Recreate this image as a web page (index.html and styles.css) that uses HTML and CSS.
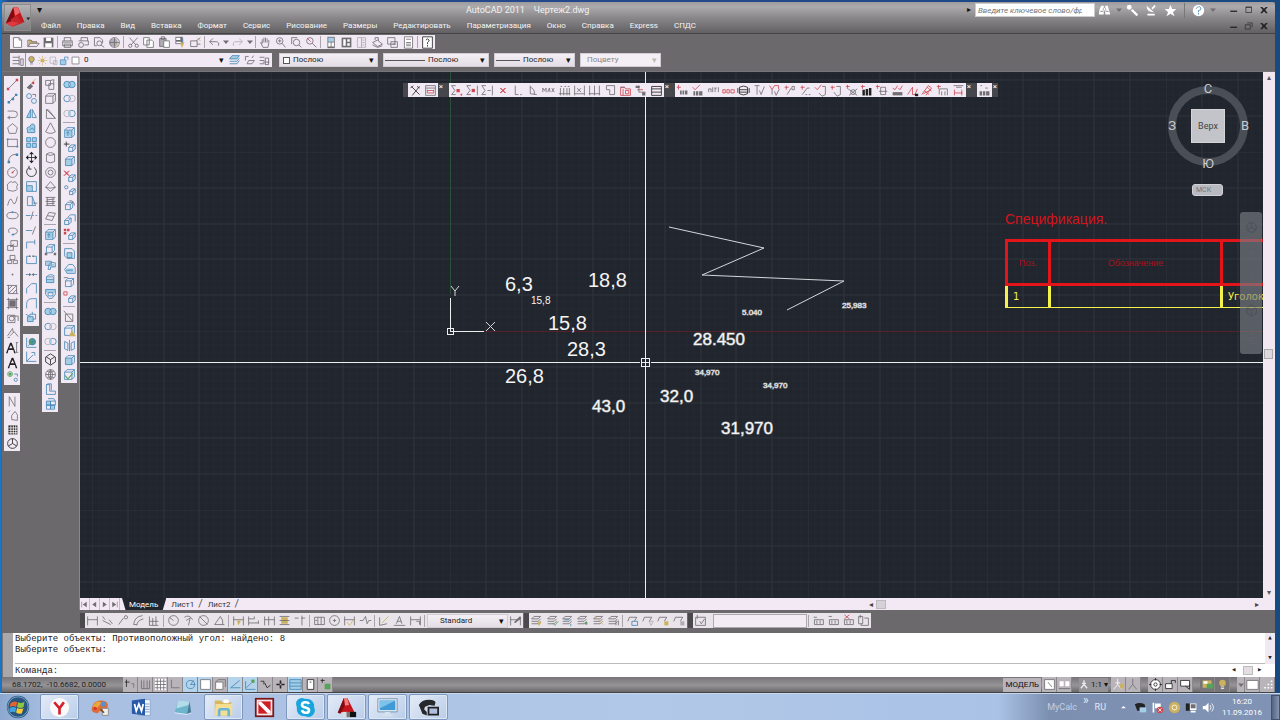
FILE: index.html
```html
<!DOCTYPE html>
<html lang="ru">
<head>
<meta charset="utf-8">
<title>AutoCAD 2011 - Чертеж2.dwg</title>
<link rel="stylesheet" href="styles.css">
</head>
<body>
<div class="window">
  <header class="titlebar">
    <button class="app-btn" aria-label="Меню приложения">
      <svg viewBox="0 0 28 26"><path d="M1 19 9 2h5l7 16-6 1-2-3-6 1-1 4z" fill="#c4161c"/><path d="M9 2 1 19l5 2 4-9z" fill="#7e0b10"/><path d="M9 2h5l2 6-5 3z" fill="#f0656a"/><path d="M6 15l7-4 6 8-11 4z" fill="#c4262c"/><path d="M1 19l6-2 8 2-8 4z" fill="#e03a3f"/><path d="M23 13h4l-2 3z" fill="#222"/></svg>
    </button>
    <div class="title-main">
      <div class="title-row">
        <button class="quick" aria-label="Настройка панели">▾</button>
        <h1>AutoCAD 2011 &nbsp;&nbsp; Чертеж2.dwg</h1>
        <div class="search">
          <span class="tri">▸</span>
          <input type="search" aria-label="Поиск" placeholder="Введите ключевое слово/фразу">
          <div class="icons light" data-icons="binoc tiny key dish star"></div>
          <div class="icons light helpgrp" data-icons="help tiny"></div>
          <div class="icons wctl" data-icons="wmin wmax wclose"></div>
        </div>
      </div>
      <div class="menu-row">
        <nav class="menu">
          <button>Файл</button><button>Правка</button><button>Вид</button><button>Вставка</button><button>Формат</button><button>Сервис</button><button>Рисование</button><button>Размеры</button><button>Редактировать</button><button>Параметризация</button><button>Окно</button><button>Справка</button><button>Express</button><button>СПДС</button>
        </nav>
        <div class="icons wctl" data-icons="wmin wrest wclose"></div>
      </div>
    </div>
  </header>

  <div class="toolrows">
    <div class="bar std" role="toolbar" aria-label="Стандартная" data-icons="new open save | print preview plot globe | cut copy paste match block | undo tiny redo tiny | pan zoomr zoomw zoomp | props dc pal sheet markup calc | helpb"></div>
    <div class="proprow">
      <div class="bar layers" role="toolbar" aria-label="Слои">
        <div class="icons" data-icons="layerp"></div>
        <div class="layerbox">
          <div class="icons" data-icons="bulb sun freeze lock swatch"></div>
          <select aria-label="Слой"><option>0</option></select>
        </div>
        <div class="icons" data-icons="layblue layprev laystate"></div>
      </div>
      <div class="props">
        <div class="sel color"><i class="box"></i><select aria-label="Цвет"><option>Послою</option></select></div>
        <div class="sel lt"><i class="line"></i><select aria-label="Тип линий"><option>Послою</option></select></div>
        <div class="sel lw"><i class="line short"></i><select aria-label="Вес линий"><option>Послою</option></select></div>
        <div class="sel off"><select aria-label="Стиль печати" disabled><option>Поцвету</option></select></div>
      </div>
    </div>
  </div>

  <div class="work">
    <aside class="dock">
      <div class="dockcol">
        <div class="bar v n21" role="toolbar" aria-label="Рисование" data-icons="line xline pline poly rect arc circ cloud spline ell ellarc insb mkb point hatch grad region tbl mtext text add"></div>
        <div class="bar v n4" role="toolbar" aria-label="Север" data-icons="north leaf gridb wheel"></div>
      </div>
      <div class="dockcol">
        <div class="bar v n17" role="toolbar" aria-label="Редактирование" data-icons="brush copyo mirror offset array move rotate scale stretch trim extend break1 break2 join chamf fillet explode"></div>
        <div class="bar v n2" role="toolbar" aria-label="ПСК" data-icons="ucsw ucs3"></div>
      </div>
      <div class="dockcol">
        <div class="bar v m3" role="toolbar" aria-label="Моделирование" data-icons="psolid box wedge cone sphere cyl torus pyr helix plane | extr press sweep revolve loft | union subt inter | orbit globe2 lshape cubes"></div>
      </div>
      <div class="dockcol">
        <div class="bar v m4" role="toolbar" aria-label="Редактирование тел" data-icons="union subt inter | extr movef cube delf copyf rotf tapf colf | copye cole imprint clean | boxline warn sep2 cube check"></div>
      </div>
    </aside>

    <main class="docwin">
      <div class="viewrow">
        <div class="canvas">
          <svg class="drawing" aria-label="Чертеж">
            <defs>
              <pattern id="major" x="450" y="331" width="179" height="179" patternUnits="userSpaceOnUse">
                <path d="M7 0v179M14 0v179M22 0v179M29 0v179M43 0v179M50 0v179M58 0v179M65 0v179M79 0v179M86 0v179M93 0v179M100 0v179M114 0v179M122 0v179M129 0v179M136 0v179M150 0v179M157 0v179M165 0v179M172 0v179M0 7h179M0 14h179M0 22h179M0 29h179M0 43h179M0 50h179M0 58h179M0 65h179M0 79h179M0 86h179M0 93h179M0 100h179M0 114h179M0 122h179M0 129h179M0 136h179M0 150h179M0 157h179M0 165h179M0 172h179" stroke="#242931"/>
                <path d="M0 0v179M36 0v179M72 0v179M107 0v179M143 0v179M0 0h179M0 36h179M0 72h179M0 107h179M0 143h179" stroke="#2e343d"/>
              </pattern>
            </defs>
            <g transform="translate(-80 -72)">
              <path d="M80 72h4000v3000h-4000z" fill="url(#major)" shape-rendering="crispEdges"/>
              <g fill="none" shape-rendering="crispEdges">
                <path d="M450 331h4000" stroke="#552129"/>
                <path d="M450 72v222" stroke="#2c4f3a"/>
                <path d="M450 298v33H484M447 328h6v6h-6zM80 362h560M651 362h4000M645 72v286M645 367v3000M641 358h8v8h-8zM642 362h7M645 359v7" stroke="#eceef0"/>
              </g>
              <g fill="none" stroke="#d4d6da">
                <path d="M451 286l4 5 4-5M455 291v5M486 322l9 9M495 322l-9 9"/>
                <path d="M669 227 764 248 702 275 844 281 787 310"/>
              </g>
              <g class="num">
                <text x="505" y="291">6,3</text><text x="588" y="287">18,8</text><text x="548" y="330">15,8</text><text x="567" y="356">28,3</text><text x="505" y="383">26,8</text>
                <text class="sm" x="531" y="304">15,8</text>
              </g>
              <g class="num nar">
                <text x="592" y="412">43,0</text><text x="660" y="402">32,0</text><text x="693" y="345">28.450</text><text x="721" y="434">31,970</text>
                <text class="sm" x="742" y="315">5.040</text><text class="sm" x="695" y="375">34,970</text><text class="sm" x="763" y="388">34,970</text><text class="sm" x="842" y="308">25,983</text>
              </g>
            </g>
          </svg>

          <table class="spec">
            <caption>Спецификация.</caption>
            <tr><th>Поз.</th><th>Обозначение</th><th></th></tr>
            <tr><td>1</td><td></td><td>Уголок</td></tr>
          </table>

          <div class="floats">
            <div class="bar f f2" role="toolbar" aria-label="Настройки" data-icons="hammer redset"></div><button class="cl" aria-label="Закрыть">×</button>
            <div class="bar f f14" role="toolbar" aria-label="Размеры СПДС" data-icons="sig sig2 sig3 xred ell2 angb max arrs arr1 arr2 sq fold flags rows"></div><button class="cl" aria-label="Закрыть">×</button>
            <div class="bar f f19" role="toolbar" aria-label="Выноски СПДС" data-icons="pnum cnum alt redt stack tv yv sn1 sn2 tag1 tag2 gearr bars brack lev tri3 rhat comb dimr"></div><button class="cl" aria-label="Закрыть">×</button>
            <div class="bar f f1" role="toolbar" aria-label="Отметки" data-icons="note"></div><button class="cl" aria-label="Закрыть">×</button>
          </div>

          <div class="cube">
            <div class="ring"></div>
            <span class="dir n">С</span><span class="dir w">З</span><span class="dir e">В</span><span class="dir s">Ю</span>
            <button class="face">Верх</button>
            <button class="wcs">МСК</button>
          </div>
          <div class="navbar"><div class="icons" data-icons="wheel pan zoomr orbit markup"></div></div>
        </div>
        <div class="vscroll"><button aria-label="Вверх">▴</button><i></i><button aria-label="Вниз">▾</button></div>
      </div>
      <div class="tabs">
        <div class="icons tabnav" data-icons="first prev next last"></div>
        <button class="tab on">Модель</button><button class="tab">Лист1</button><button class="tab">Лист2</button>
        <div class="hscroll"><button aria-label="Влево">◂</button><i></i><button class="end" aria-label="Вправо">▸</button></div>
      </div>
    </main>
  </div>

  <div class="bottombars">
    <div class="bar d1" role="toolbar" aria-label="Размер">
      <div class="icons grow" data-icons="dlin dalign darc0 darc dord | drad djog ddia dang | dq dbase dcont dspace dbreak | dtol dcen dinsp djl | ded dted dupd |"></div>
      <div class="sel std2"><select aria-label="Размерный стиль"><option>Standard</option></select></div>
      <div class="icons" data-icons="dsty"></div>
    </div>
    <div class="bar d2" role="toolbar" aria-label="Слои II" data-icons="lay1 lay2 lay3 lay4 lay5 lay6 | lay7 lay8 lay9 lay10"></div>
    <div class="bar d3" role="toolbar" aria-label="Ссылки">
      <div class="icons" data-icons="refed"></div><input aria-label="Имя ссылки"><div class="icons grow" data-icons="| refa refr refx refs"></div>
    </div>
  </div>

  <section class="cmd">
    <div class="grip"></div>
    <div class="cmdtext">
      <div class="log"><p>Выберите объекты: Противоположный угол: найдено: 8</p><p>Выберите объекты:</p></div>
      <div class="prompt"><label for="cmdline">Команда:</label><input id="cmdline"><span class="cs">◂</span><i></i><span class="cs">▸</span></div>
    </div>
    <div class="cscroll"><button aria-label="Вверх">▴</button><button aria-label="Вниз">▾</button></div>
  </section>

  <footer class="status">
    <span class="coords">68.1702, &nbsp;-10.6682, 0.0000</span>
    <div class="icons sb" data-icons="s1 s2 s3 s4 s5+ s6+ s7 s8+ s9+ s10 s11 s12+ s13 s14"></div>
    <div class="sright">
      <button class="model">МОДЕЛЬ</button>
      <div class="icons sb" data-icons="m1 m2"></div>
      <button class="scale"><svg viewBox="0 0 16 16"><path d="M8 1v7L3 14M8 8l5 6M5 6h6" stroke="#eee" stroke-width="2" fill="none"/></svg>1:1 ▾</button>
      <div class="icons sb" data-icons="m3 m4"></div>
      <div class="icons sb" data-icons="m5 m6 m7"></div>
      <div class="icons sb dark" data-icons="m8 m9"></div>
      <div class="icons sb" data-icons="tiny m10 m11"></div>
    </div>
  </footer>
</div>

<div class="taskbar">
  <button class="start" aria-label="Пуск"><svg viewBox="0 0 28 28"><circle cx="14" cy="14" r="12" fill="#28557f"/><circle cx="14" cy="14" r="11" fill="none" stroke="#7ba7c9"/><path d="M6 10q4-3 7-1l-1 5q-3-2-7 0z" fill="#e8622c"/><path d="M14 9q4 2 7-1l-1 6q-4 2-7 0z" fill="#8cc63f"/><path d="M5 15q4-2 7 0l-1 5q-3-2-6 0z" fill="#3fa3dd"/><path d="M13 15q4 2 7 0l-2 6q-3 1-6-1z" fill="#fccb2e"/></svg></button>
  <div class="tasks">
    <button class="open" aria-label="Яндекс"><svg viewBox="0 0 24 24"><circle cx="12" cy="12" r="11" fill="#fafafa"/><path d="M6 6l6 7 5-7M12 13v7" stroke="#d5202b" stroke-width="3" fill="none"/></svg></button>
    <button aria-label="Paint"><svg viewBox="0 0 24 24"><path d="M2 13Q4 3 14 4q8 1 6 8-3 6-9 4-2 4-5 2-5-1-4-5z" fill="#dc6d36"/><path d="M3 10l5-5 6 1-7 8z" fill="#eaa83b"/><circle cx="15" cy="8" r="3" fill="#5a8fd0"/><circle cx="6" cy="13" r="2" fill="#d33"/><path d="M14 13h7v8h-7z" fill="#eee" stroke="#888"/><path d="M12 14l4 4" stroke="#7c4a1d" stroke-width="2"/></svg></button>
    <button aria-label="Word"><svg viewBox="0 0 24 24"><path d="M9 3h13v18H9z" fill="#f4f7fc" stroke="#8aa5cc"/><path d="M16 8h5M16 11h5M16 14h5M16 17h5" stroke="#6e93c8"/><path d="M1 4l15-2v19L1 19z" fill="#275aa8"/><path d="M4 8l2 8 3-8 3 8 2-8" stroke="#fff" stroke-width="2" fill="none"/></svg></button>
    <button aria-label="Блокнот"><svg viewBox="0 0 24 24"><path d="M7 4l13 1-3 15-14-2z" fill="#6eb4cc"/><path d="M7 4l13 1-1 4L5 13z" fill="#b4dce8"/><path d="M20 5l2 13-5 2z" fill="#487f96"/><path d="M3 18l14 2 5-2" stroke="#eef" fill="none"/></svg></button>
    <button class="open" aria-label="Проводник"><svg viewBox="0 0 24 24"><path d="M2 4h7l2 2h10v15H2z" fill="#d9b75e"/><path d="M3 8h19v13H2z" fill="#f4de92"/><path d="M12 3h6v4h-6z" fill="#fff"/><path d="M7 22v-6q0-2 2-2h7q2 0 2 2v6" fill="none" stroke="#69b4dc" stroke-width="3"/></svg></button>
    <button aria-label="NormaCS"><svg viewBox="0 0 24 24"><path d="M1 1h22v22H1z" fill="#7d1518"/><path d="M3 3h18v18H3z" fill="#f3e6e6"/><path d="M5 5h14v14H5z" fill="#d01c24"/><path d="M5 5h3l11 11v3h-3L5 8z" fill="#fff"/></svg></button>
    <button class="open" aria-label="Skype"><svg viewBox="0 0 24 24"><path d="M3 3q4-3 8-1 11-1 11 10 2 5-2 9-4 3-8 1Q1 22 2 11 0 6 3 3z" fill="#18a5dc"/><path d="M16 8q-1-2-4-2-4 0-4 3 0 2 4 3t4 3q0 3-4 3-3 0-4-3" stroke="#fff" stroke-width="3" fill="none"/></svg></button>
    <button class="open" aria-label="AutoCAD"><svg viewBox="0 0 24 24"><path d="M2 18 9 1h4l8 16H9z" fill="#c4161c"/><path d="M9 1h4l2 8-5 1z" fill="#f37a7e"/><path d="M9 1 2 18l3 1 5-9z" fill="#7c0d12"/><path d="M8 17h5v6H8z" fill="#ddd"/><path d="M12 17h5v6h-5z" fill="#777"/><path d="M16 17h7v6h-7z" fill="#111"/></svg></button>
    <button class="open" aria-label="Компьютер"><svg viewBox="0 0 24 24"><path d="M1 2h22v15H1z" fill="#e8f1f8" stroke="#6e8ca8"/><path d="M3 4h18v11H3z" fill="#3f9ad6"/><path d="M3 4h18L3 13z" fill="#7cc2ec"/><path d="M9 17h6v3h3v2H6v-2h3z" fill="#d6e2ec"/></svg></button>
    <button class="open" aria-label="Камера"><svg viewBox="0 0 24 24"><path d="M1 9q3-6 12-6 6 0 7 3l-1 4-6-1-5 2-1 3 3 3v4l-5-2-2-5z" fill="#26282b"/><path d="M12 12h11v8H12z" fill="#aebfe0" stroke="#222" stroke-width="2"/></svg></button>
  </div>
  <div class="tray">
    <span>MyCalc</span><span class="chev">»</span><span class="lang">RU</span>
    <div class="icons" data-icons="trup tcam tflag tav tnet tvol"></div>
    <time class="clock">16:20<br>11.09.2016</time>
    <button class="show" aria-label="Свернуть все окна"></button>
  </div>
</div>
<script src="icons.js"></script>
</body>
</html>
```
FILE: styles.css
```css
* { box-sizing: border-box; }
body { margin: 0; height: 100vh; display: flex; flex-direction: column; overflow: hidden; font: 8px/10px Roboto, "Noto Sans", sans-serif; color: #222; background: linear-gradient(90deg, #1a78c8, #24488a 8px, #24488a 60%, #174a80); }
button, input, select { font: inherit; color: inherit; margin: 0; padding: 0; border: 0; background: none; border-radius: 0; }
select { appearance: none; flex: 1; min-width: 0; height: 100%; outline: 0; opacity: 1; }
svg { display: block; }
h1, p { margin: 0; font-weight: 400; }
.window { flex: 1; min-height: 0; margin: 2px 5px 0 2px; display: flex; flex-direction: column; background: #6b696b; }

.titlebar { height: 32px; display: flex; background: linear-gradient(#9d9b9e, #acaaac 15%, #8a888a 50%, #626062); border-bottom: 1px solid #444; border-radius: 3px 3px 0 0; }
.app-btn { width: 27px; height: 27px; margin: 2px 0 0 2px; background: linear-gradient(#b5b3b5, #807e80); border: 1px solid #8c8a8c; }
.app-btn svg { width: 26px; height: 25px; }
.title-main { flex: 1; display: flex; flex-direction: column; }
.title-row { height: 17px; display: flex; align-items: center; justify-content: space-between; }
.quick { width: 16px; color: #111; font-size: 10px; }
.title-row h1 { margin-left: 419px; flex: 1; color: #f2f2f2; font-size: 9px; }
.search { display: flex; align-items: center; height: 16px; }
.search .tri { color: #111; width: 8px; }
.search input { width: 120px; height: 14px; background: #fff; font-style: italic; padding: 0 2px; border: 1px solid #ccc; }
.search input::placeholder { color: #777; opacity: 1; }
.helpgrp { border-left: 1px solid #777; margin-left: 4px; padding-left: 4px; }
.wctl { margin: 0 4px 0 9px; }
.wctl .ic { width: 10px; height: 10px; }
.wctl button { width: 11px; }
.menu-row { flex: 1; display: flex; justify-content: space-between; align-items: center; }
.menu { display: flex; gap: 16px; margin-left: 10px; color: #f4f4f4; }

.icons { display: flex; align-items: center; }
.icons button, .bar button { width: 15px; height: 15px; display: flex; align-items: center; justify-content: center; flex: 0 1 auto; }
.icons button.tiny, .bar button.tiny { width: 8px; }
.ic { width: 13px; height: 13px; fill: none; stroke-width: 1; flex: none; }
.tiny .ic { width: 8px; height: 8px; }
.light button { width: 19px; }
.light button.tiny { width: 9px; }
.bar { display: flex; background: #f1e9f3; align-items: center; }
.bar > button { flex: 1; }
.bar > button.tiny { flex: 0 0 8px; }
.bar hr, .icons hr { margin: 0 1px; border: 0; width: 2px; height: 12px; border-left: 1px solid #aaa5ac; flex: none; }
.bar .grow { flex: 1; justify-content: space-between; }
.grow button { flex: 1; }

.toolrows { height: 38px; padding: 1px 0 0 8px; display: flex; flex-direction: column; gap: 4px; border-bottom: 1px solid #77757a; }
.std { width: 425px; height: 14px; }
.proprow { display: flex; height: 14px; }
.layers { width: 262px; height: 14px; }
.layerbox { flex: 1; display: flex; align-items: center; height: 14px; border-left: 1px solid #999; }
.layerbox .icons button { width: 11px; }
.layerbox .ic { width: 11px; height: 11px; }
.layerbox::after, .sel::after { content: "▾"; width: 8px; color: #111; pointer-events: none; font-size: 9px; }
.layerbox select { padding-left: 3px; }
.props { display: flex; margin-left: 7px; gap: 5px; }
.sel { display: flex; align-items: center; height: 14px; background: linear-gradient(#f4eef5, #e4dde5); border: 1px solid #d2ccd3; }
.sel select { padding-left: 3px; }
.sel.color, .sel.std2 { width: 99px; }
.sel.lt { width: 106px; }
.sel.lw { width: 81px; }
.sel.off { width: 81px; color: #888; background: #f4eef5; }
.sel.off select { padding-left: 6px; }
.sel.off::after { color: #bbb; }
.box { width: 7px; height: 7px; border: 1px solid #555; background: #fff; margin-left: 3px; }
.line { width: 40px; height: 1px; background: #555; margin-left: 1px; }
.line.short { width: 24px; }

.work { flex: 1; min-height: 0; display: flex; }
.dock { width: 78px; display: flex; gap: 3px; padding: 4px 0 0 2px; border-right: 1px solid #8a888a; }
.dockcol { display: flex; flex-direction: column; gap: 8px; width: 16px; flex: none; }
.bar.v { flex-direction: column; width: 16px; padding: 1px 0; }
.bar.v > button { min-height: 0; }
.bar.v hr { width: 12px; height: 2px; border: 0; border-top: 1px solid #aaa5ac; margin: 1px 0; }
.n21 { height: 309px; }
.n4 { height: 58px; }
.n17 { height: 250px; }
.n2 { height: 30px; }
.m3 { height: 336px; }
.m4 { height: 307px; }

.docwin { flex: 1; min-width: 0; display: flex; flex-direction: column; }
.viewrow { flex: 1; min-height: 0; display: flex; }
.canvas { flex: 1; min-width: 0; position: relative; overflow: hidden; background: #21252d; }
.drawing { position: absolute; inset: 0; width: 100%; height: 100%; }
.num { font: 20px "Liberation Sans", sans-serif; fill: #f4f4f4; }
.sm { font-size: 10px; }
.nar { font-size: 17px; stroke: #f4f4f4; stroke-width: 1px; stroke-opacity: .5; }
.nar .sm { font-size: 8px; }
.spec { position: absolute; left: 925px; top: 138px; width: 420px; table-layout: fixed; border-collapse: collapse; font: 9px/12px "Liberation Sans", sans-serif; }
.spec caption { text-align: left; color: #d3141c; font-size: 14px; line-height: 18px; padding-bottom: 11px; }
.spec th { border: 3px solid #e3151b; height: 44px; padding: 0; color: #a5141c; font-weight: 400; }
.spec th:nth-child(1) { width: 43px; }
.spec th:nth-child(2) { width: 172px; }
.spec td { height: 23px; padding: 0 5px; color: #f4f04c; border: solid #f4f04c; border-width: 0 3px 1px; font-family: "DejaVu Sans", sans-serif; font-size: 10px; }

.floats { position: absolute; left: 323px; top: 11px; display: flex; align-items: flex-start; }
.bar.f { height: 14px; border-left: 5px solid #45474d; box-sizing: content-box; }
.f2 { width: 30px; }
.f14 { width: 215px; }
.f19 { width: 291px; }
.f1 { width: 15px; }
.cl { width: 6px; height: 14px; line-height: 8px; background: #45474d; color: #fff; font-size: 8px; display: flex; justify-content: center; }

.cube { position: absolute; right: 11px; top: 9px; width: 88px; height: 116px; color: #c9cbd0; }
.ring { position: absolute; left: 4px; top: 5px; width: 80px; height: 80px; border: 8px solid #4a4e57; border-radius: 50%; }
.dir { position: absolute; font-size: 13px; line-height: 16px; width: 16px; text-align: center; }
.n { left: 36px; top: 0; }
.w { left: 0; top: 37px; }
.e { left: 73px; top: 37px; }
.s { left: 36px; top: 75px; }
.face { position: absolute; left: 27px; top: 28px; width: 34px; height: 34px; background: #c3c4c9; border: 1px solid #d4d5d8; color: #444; font-size: 9px; }
.wcs { position: absolute; left: 28px; top: 103px; width: 31px; height: 12px; background: #b9bac1; border: 1px solid #d0d0d6; border-radius: 3px; color: #74757d; font-size: 7px; line-height: 9px; text-align: left; padding-left: 3px; }
.navbar { position: absolute; right: 1px; top: 140px; width: 22px; height: 142px; border-radius: 3px; background: rgb(120 123 131 / 65%); padding: 8px 3px; }
.navbar .icons { flex-direction: column; justify-content: space-between; height: 100%; opacity: .25; }

.vscroll { width: 12px; background: #f1e8f2; display: flex; flex-direction: column; }
.vscroll button { height: 11px; color: #555; }
.vscroll i { width: 9px; height: 10px; margin: auto 1px 228px; background: #ddd8df; border: 1px solid #aaa; }
.tabs { height: 12px; display: flex; background: #f3e9f4; align-items: stretch; line-height: 11px; }
.tabnav button { width: 10px; height: 12px; border-right: 1px solid #c5bfc7; }
.tabnav .ic { width: 9px; height: 9px; }
.tab { padding: 0 0 0 5px; color: #333; }
.tab:not(.on)::after { content: "/"; color: #555; font-size: 11px; padding-left: 4px; }
.tab.on { margin-left: 2px; background: #21252d; color: #fff; padding: 0 8px 0 7px; clip-path: polygon(0 0, 100% 0, 92% 100%, 8% 100%); }
.hscroll { margin-left: auto; width: 34%; display: flex; align-items: center; gap: 3px; color: #444; }
.hscroll i { width: 10px; height: 9px; background: #d6d1d8; border: 1px solid #bbb; }
.hscroll .end { margin-left: auto; margin-right: 16px; }

.bottombars { height: 23px; padding: 3px 0 4px 78px; display: flex; }
.bottombars .bar { height: 15px; border-left: 5px solid #4b494c; box-sizing: content-box; background: #e9e3ea; }
.d1 { width: 438px; }
.d2 { width: 158px; margin-left: 1px; }
.d3 { width: 178px; margin-left: 1px; }
.std2 select { padding-left: 12px; }
.d1 .std2 { width: 81px; }
.d3 input { width: 94px; height: 14px; background: #f4ecf5; border: 1px solid #aaa; margin-left: 5px; }

.cmd { height: 44px; display: flex; background: #fff; font: 9px/11px "Liberation Mono", monospace; }
.grip { width: 11px; background: #a9a7aa; border-left: 1px solid #777; }
.cmdtext { flex: 1; display: flex; flex-direction: column; padding-left: 2px; }
.log { flex: 1; border-bottom: 1px solid #bbb; padding-top: 1px; }
.prompt { height: 13px; display: flex; align-items: center; gap: 4px; }
.prompt label { padding-top: 2px; }
.prompt input { flex: 1; height: 11px; outline: 0; }
.prompt i { width: 10px; height: 9px; background: #e3dee4; border: 1px solid #bbb; }
.prompt .cs { width: 8px; }
.cscroll { width: 10px; height: 31px; background: #f1e9f2; display: flex; flex-direction: column; justify-content: space-between; }

.status { height: 16px; display: flex; align-items: center; justify-content: space-between; background: linear-gradient(#767476, #969496 55%, #6a686a); color: #222; border-bottom: 1px solid #444; }
.coords { width: 121px; padding-left: 10px; }
.sb button { height: 15px; border-right: 1px solid #8a888a; background: #b8b4ba; }
.sb button.on { background: #b5d3ea; }
.sright { margin-left: auto; display: flex; align-items: center; gap: 7px; color: #111; }
.model { height: 14px; padding: 0 2px; background: #b8b4ba; margin-right: -6px; }
.scale { display: flex; align-items: center; height: 14px; gap: 2px; background: #969398; margin-right: -4px; color: #111; }
.scale svg { width: 10px; height: 11px; }
.dark button { background: #77757a; }

.taskbar { height: 27px; display: flex; align-items: center; background: linear-gradient(90deg, #8ea9cf, #a8bfe2 4%, #b2c8e8 50%, #a9c2e6 78%, #7c8fb0 82%, #8093b4 98%); border-top: 1px solid #c7d8ee; }
.start { width: 36px; height: 26px; display: flex; justify-content: center; }
.start svg { width: 26px; height: 26px; }
.tasks { display: flex; gap: 2px; margin-left: 4px; height: 26px; }
.tasks button { width: 39px; display: flex; align-items: center; justify-content: center; border-radius: 2px; }
.tasks .open { background: linear-gradient(135deg, #e3ebf7, #bacde9); border: 1px solid #8097bd; box-shadow: inset 0 0 0 1px #dde8f7; }
.tasks svg { width: 21px; height: 21px; }
.tray { margin-left: auto; display: flex; align-items: center; color: #e2e9f4; font-size: 9px; height: 100%; }
.tray > span:first-child { color: #c3cfe2; }
.chev { margin: -14px 6px 0; font-size: 12px; }
.lang { margin-right: 9px; }
.tray .icons button { width: 17px; }
.clock { width: 50px; text-align: center; line-height: 11px; font-size: 8px; color: #fff; }
.show { width: 9px; height: 25px; background: linear-gradient(90deg, #53637f, #8596b4); border: 1px solid #44526c; margin-left: 4px; }
```
FILE: icons.js
```javascript
// Icon table. Layers are split by "|"; each is "<colour>:<path>", a capital colour letter fills instead of stroking.
const COLORS = { k: '#706d73', b: '#4285b4', l: '#a3cfe6', r: '#cc4850', y: '#ccb25e', g: '#55a25c', w: '#ffffff', s: '#b0acb4', d: '#222222' };
const circle = (x, y, r) => `M${x - r} ${y}a${r} ${r} 0 1 0 ${2 * r} 0a${r} ${r} 0 1 0 ${-2 * r} 0z`;
const cubeAt = (x, y, s) => `b:M${x} ${y + 3}h${s}v${s}h${-s}zM${x} ${y + 3}l3-3h${s}v${s}l-3 3M${x + s} ${y + 3}l3-3`;
const stack = 'k:M5 3h8l-3 3H2zM2 9h8l3-3M2 12h8l3-3';
const dim = 'k:M2 3v11M14 3v11M2 7h12';
const ICONS = {
  new: 'W:M3 2h7l3 3v9H3z|k:M3 2h7l3 3v9H3zM10 2v3h3', open: 'Y:M2 5h4l1 2h5v2H5l-3 4z|k:M1 13V5h4l1 2h6v2M1 13l3-4h11l-3 4z',
  save: 'K:M2 2h12v12H2z|W:M5 2h6v4H5zM4 9h8v5H4z', print: 'k:M4 6V2h8v4M2 6h12v6H2zM4 10h8v4H4z|S:M2 6h12v3H2z', preview: 'k:M5 6V2h8v4M2 6h12v5H9|k:' + circle(5, 11, 3),
  plot: 'k:M3 2h7l3 3v4M3 2v10h3|k:' + circle(9, 9, 3) + 'M11 11l4 3', globe: 'S:' + circle(7, 8, 5) + '|k:' + circle(8, 8, 6) + 'M2 8h12M8 2v12|y:M9 9l4 4',
  cut: 'k:M3 2l8 9M13 2L5 11|k:' + circle(4, 12, 2) + circle(12, 12, 2), copy: 'W:M2 2h7v9H2zM6 5h8v9H6z|k:M2 2h7v9H2zM6 5h6l2 2v7H6z', paste: 'S:M2 3h8v10H2z|k:M2 3h8v10H2zM4 1h4v3H4z|W:M7 6h7v8H7z|k:M7 6h7v8H7z',
  match: 'K:M3 1h9v9H3z|W:M4 2h5v3H4zM4 7h6v2H4z|Y:M9 8h5l-3 7z|b:M12 3v5', block: 'k:M2 6h8v7H2zM9 6l5-4M10 10h4|y:M10 2l4 4',
  undo: 'k:M6 3L2 7l4 4M2 7h8q4 0 3 5', redo: 's:M10 3l4 4-4 4M14 7H6q-4 0-3 5', tiny: 'K:M2 5h12l-6 7z',
  pan: 'k:M4 9V4M6 8V2M8 8V2M10 8V3M12 9V5M4 9l-2-1 3 6h6l1-5', zoomr: 'k:' + circle(7, 6, 4) + 'M10 9l4 5M5 6h4M7 4v4', zoomw: 'k:M2 2h7M2 2v8|k:' + circle(8, 8, 4) + 'M11 11l3 3', zoomp: 'k:' + circle(6, 6, 4) + 'M9 9l5 5|r:M3 3l4 4',
  props: 'K:M3 1h9v14H3z|L:M4 2h7v5H4z|W:M4 8h3v5H4zM8 8h3v5H8z', dc: 'K:M2 2h12v12H2z|W:M4 4h3v8H4zM9 4h3v3H9zM9 9h3v3H9z', pal: 's:M3 2h5v12H3zM8 2h5v12H8zM9 5h3M9 8h3M9 11h3',
  sheet: 'k:M2 8l6-3 6 5-6 3zM2 11l6 3 6-2M5 5V2h4v4', markup: 'k:M2 2h9v8H2zM6 7h8v7H6zM8 10h4', calc: 'W:M3 1h10v14H3z|k:M3 1h10v14H3zM5 4h6M5 8h6M5 10h6M5 12h6', helpb: 'W:M2 1h12v14H2z|d:M2 1h12v14H2zM6 5q2-3 4 0 0 2-2 3v2M8 11v2',
  layerp: 'k:M2 4h8M2 8h8M2 12h8M10 2v12M12 6h3v8h-3z', bulb: 'Y:' + circle(8, 6, 4) + '|k:' + circle(8, 6, 4) + 'M6 11h4M6 13h4', sun: 'Y:' + circle(8, 8, 3) + '|y:M8 1v3M8 12v3M1 8h3M12 8h3M3 3l2 2M13 3l-2 2M3 13l2-2M13 13l-2-2',
  freeze: 's:M3 3h8v9H3zM8 8h5v6H8z', lock: 'L:M2 7h8v7H2z|b:M2 7h8v7H2zM8 7V3h5v4', swatch: 'W:M3 3h10v10H3z|k:M3 3h10v10H3z',
  layblue: 'L:M5 2h9l-3 4H2z|b:M5 2h9l-3 4H2zM2 9h9l3-4M2 12h9l3-4', layprev: 'k:M3 3h4M3 3v5M7 8h7l-3 4H5zM11 5l2-3', laystate: 'k:M2 4h6M2 8h6M2 12h6M9 5h4v8H9zM6 10h8',
  line: 'k:M3 13L13 3|R:M1 12h3v3H1zM12 1h3v3h-3z', xline: 'k:M3 13L13 3|B:M2 11h3v3H2zM7 7h3v3H7zM11 2h3v3h-3z', pline: 'k:M2 5h8q4 0 4 4t-5 4H3M5 11l-3 2 3 2', poly: 'k:M8 2l6 5-2 7H4L2 7z', rect: 'k:M2 4h12v9H2z|B:M1 3h2v2H1zM13 12h2v2h-2z',
  arc: 'k:M3 14Q3 4 13 4|B:M2 12h3v3H2zM12 3h3v3h-3z', circ: 'k:' + circle(8, 8, 6) + 'M8 8l3-3|R:M7 7h2v2H7z', cloud: 'k:M4 3q3-2 4 0 4-2 5 1 3 2 0 4 2 5-2 5-4 2-5 0-5 1-4-4-2-3 2-6z', spline: 'k:M2 13Q5 0 8 8t6-6', ell: 'k:M1 8q0-4 7-4t7 4-7 4-7-4z|B:M7 3h2v2H7z', ellarc: 'k:M4 11q-3-6 4-6 6 0 6 4 0 3-5 4|B:M7 12h3v2H7z',
  insb: 'k:M6 2h8v7H6zM2 8h7v6H2zM10 6l-5 4', mkb: 'k:M5 3h6v5H5zM2 9h5v4H2zM9 9h5v4H9z', point: 'K:M7 7h2v2H7z', hatch: 'k:M3 3h10v10H3zM3 8l5-5M3 13L13 3M8 13l5-5M1 3h3M13 13h2', grad: 'K:M4 4h8v8H4z|k:M3 1v14M13 1v14M1 3h14M1 13h14', region: 'k:M2 4h9v9H2zM6 5h9v6|k:' + circle(7, 8, 3),
  tbl: 'k:M2 12L8 3l1 5M5 12l5-5 5 6M2 14h3', mtext: 'D:M0 15L5 2h2l5 13h-2l-1-4H3l-1 4zM4 9h4L6 5z|k:M13 2v12M12 2h3M12 14h3', text: 'D:M2 15L7 2h2l5 13h-2l-1-4H5l-1 4zM6 9h4L8 5z', add: 'g:' + circle(5, 5, 3) + '|G:' + circle(5, 5, 2) + '|b:' + circle(12, 12, 2) + 'M10 5h4v3',
  north: 'k:M4 14V2l7 12V2', leaf: 'k:M3 4l2-2M7 13V8l4-5 3 4v7z', gridb: 'D:M3 3h11v11H3z|w:M3 6h11M3 9h11M3 12h11M6 3v11M9 3v11M12 3v11', wheel: 'd:' + circle(8, 8, 6) + 'M8 8V2M8 8l-5 3M8 8l5 3',
  brush: 'y:M7 8l6-7|K:M2 12l5-5 3 3-4 4z|R:M8 6l2-2 2 2-2 2z', copyo: 'b:' + circle(5, 5, 3) + circle(11, 11, 3) + '|k:M9 3h4v3', mirror: 'L:M2 13l5-10v10z|b:M2 13l5-10v10zM14 13L9 3v10z', offset: 'L:M3 10q-2-4 3-4 2-6 6-2v9H3z|b:M3 10q-2-4 3-4 2-6 6-2v9H3zM6 10q3-5 5 0', array: 'L:M2 2h5v5H2zM9 2h5v5H9zM2 9h5v5H2zM9 9h5v5H9z|b:M2 2h5v5H2zM9 2h5v5H9zM2 9h5v5H2zM9 9h5v5H9z',
  move: 'd:M8 2v12M2 8h12|D:M5 4l3-3 3 3zM5 12l3 3 3-3zM4 5L1 8l3 3zM12 5l3 3-3 3z', rotate: 'd:M5 3a6 6 0 1 0 6 0M5 1v4h3', scale: 'L:M2 7h7v7H2z|b:M2 2h12v12H2zM2 7h7v7', stretch: 'b:M3 2h6v11H3zM9 2l4 11H9|k:M10 10h5', trim: 'b:M1 8h6M9 8h2M13 8h2|k:M7 13l3-10', extend: 'b:M1 8h8|k:M9 13l4-10', break1: 'b:M2 13V5h10M12 2v6', break2: 'b:M2 13V4h4M10 4h4v9H2|K:M5 3h2v2H5zM9 3h2v2H9z', join: 'b:M1 8h5M10 8h5|K:M5 6l3 2-3 2zM11 6L8 8l3 2z', chamf: 'b:M2 14V8l6-6h6v12', fillet: 'b:M2 14V9q0-7 7-7h5v12', explode: 'L:M3 7h7v6H3z|b:M3 7h7v6H3zM6 7V4h7v6h-3M1 4l4 2M9 1v3',
  ucsw: 'b:M2 2v12h12M4 12l3-3|G:' + circle(9, 7, 4) + '|b:' + circle(9, 7, 4) + 'M5 7h8M9 3v8', ucs3: 'b:M2 2v12h12M2 14l8-8M8 3h4v4',
  psolid: 'k:M2 3h6v6H2zM6 7h6v7H6zM8 3l4-1v6', box: 'k:M2 5h9v9H2zM2 5l3-3h9v9l-3 3M11 5l3-3', wedge: 'k:M3 3v11h11zM3 3l3 1 8 10', cone: 'k:M8 1L2 12q6 4 12 0z', sphere: 'k:' + circle(8, 8, 6), cyl: 'k:M3 4q5-4 10 0v9q-5 3-10 0zM3 4q5 3 10 0', torus: 'k:' + circle(8, 8, 6) + circle(8, 8, 3), pyr: 'k:M8 2l6 7-6 5-6-5zM2 9l6 1 6-1', helix: 'k:M2 3h12M3 6l10-1M2 8h12M3 11l10-1M2 13h12M4 3v10M11 3v10', plane: 'k:M6 3l8 1-4 9-8-2zM4 7l8 1',
  extr: 'L:M3 5h8v8H3z|' + cubeAt(2, 2, 9) + '|b:M6 12V7M4 9l2-2 2 2', press: cubeAt(3, 2, 7) + '|K:M1 12h3v3H1zM12 12h3v3h-3z', sweep: 'L:M3 5h5v3H3zM9 7h4v4H9z|b:M2 4h7v5H2zM6 9q1-5 8-3v5H8v3H5z', revolve: 'L:M3 9h9v4H3z|b:M3 6q5-5 10-1M3 6v7h9V6zM3 9h9', loft: 'L:M2 3h12v4H2z|b:M2 3h12v6l-4 5H6L2 9zM5 7h6v4H5z', union: 'L:' + circle(5, 8, 4) + circle(11, 8, 4) + '|b:' + circle(5, 8, 4) + circle(11, 8, 4), subt: 'b:' + circle(5, 8, 4) + '|s:' + circle(11, 8, 4), inter: 's:' + circle(5, 8, 4) + '|b:' + circle(11, 8, 4) + '|L:M8 5q3 3 0 6-3-3 0-6z',
  orbit: 'd:M8 1l6 4v6l-6 4-6-4V5zM8 8v6M8 8l5-3M8 8L3 5', globe2: 'k:' + circle(8, 8, 6) + 'M2 8h12M8 2v12M4 4q4 3 8 0M4 12q4-3 8 0M8 2q-5 6 0 12M8 2q5 6 0 12', lshape: 'b:M3 2h4v8h7v4H3zM3 2l2-1h4v8', cubes: 'L:M3 5h5v5H3zM8 9h5v5H8z|b:M3 5h5v5H3zM8 5h6v5H8zM3 10h5v5H3zM8 10h5v5H8zM5 2h7l2 3',
  movef: cubeAt(7, 6, 5) + '|d:M1 5h7M4 2v6', cube: 'L:M3 5h8v8H3z|' + cubeAt(3, 2, 8), delf: cubeAt(7, 6, 5) + '|r:M1 1l6 6M7 1L1 7M2 1l6 6M8 1L2 7', copyf: cubeAt(8, 6, 4) + '|b:' + circle(4, 4, 2), rotf: cubeAt(3, 4, 6) + '|k:M8 2q6 0 6 6', tapf: cubeAt(2, 5, 5) + '|b:M6 4l3-3h6v8', colf: cubeAt(7, 6, 5) + '|R:M1 1h3v3H1zM5 1h3v3H5zM1 5h3v3H1z', copye: 'L:M5 7h6v6H5z|b:M2 2h9l3 3v9H5l-3-3zM5 7h6v6H5z', cole: 'L:M4 8h9v5H4z|b:M2 9l5-6h5l3 4v7H5zM4 10h8', imprint: cubeAt(3, 3, 7) + '|k:M1 2h5', clean: cubeAt(7, 6, 5) + '|r:M1 1h4v4H1z', boxline: 'k:M3 5h9v9H3zM1 1l11 13', warn: cubeAt(2, 2, 9) + '|Y:M11 8l5 7H7z', sep2: 'b:M2 3l4 2v9l-4-2zM14 3l-4 2v9l4-2zM8 1v14', check: cubeAt(2, 2, 9) + '|g:M3 9l3 4 6-7M3 10l3 4 6-7',
  hammer: 'd:M3 3l10 10M4 14l9-11M2 5l3-3M10 3l3 2', redset: 'k:M2 2h12v12H2zM2 5h12M4 7v4M12 7v4|r:M4 8h8M4 11h8', sig: 'k:M7 2H2l4 6-4 5h5|R:M8 6h4v4H8zM13 12h2v2h-2z', sig2: 'k:M6 2H1l4 6-4 5h5M14 2v12|R:M7 6h4v4H7z', sig3: 'k:M6 2H1l4 6-4 5h5M14 2v12M8 8h4', xred: 'r:M5 5l6 6M11 5l-6 6M6 5l6 6M12 5l-6 6', ell2: 'k:M4 2v11h4M10 13h2', angb: 'k:M4 2v10l8 1M4 4q6 2 5 9', max: 'k:M1 10V5l2 3 2-3v5M7 10l2-5 1 5M12 5l3 5M15 5l-3 5', arrs: 'k:M1 12h14M3 5v9M7 5v9M11 5v9M14 5v9M3 3h2M8 3h2M12 3h2', arr1: 'k:M2 2v12M14 2v12M2 12h12M5 5l5 5M10 5l-5 5', arr2: 'k:M2 2v12M8 2v12M14 2v12M1 12h14', sq: 'k:M3 2h10v11H7V7H3z', fold: 'r:M2 4h5l1 2h6v8H2zM5 6v8M8 8h4v4H8z|k:M2 4h5', flags: 'K:M2 2h5v3H2zM10 10h4v4h-4z|r:M4 7h7|k:M6 2v8h8', rows: 'd:M2 3h12v11H2zM2 6h12M2 10h12',
  pnum: 'r:M1 4h5M3 1v6|K:M5 8h2v5H5zM8 8h2v5H8zM11 8h3v5h-3z', cnum: 'r:M2 4l3 3 6-6|K:M3 9h2v5H3zM6 9h3v5H6zM10 9h4v5h-4z', alt: 'k:M2 10V6h3v4M7 4v6M10 5v5M9 5h3M14 4v6', redt: 'r:M1 7h3v4H1zM6 7h3v4H6zM11 7h4v4h-4z', stack: 'd:M3 4q5-3 10 0v8q-5 3-10 0zM3 7h10M3 10h10M1 5v6M15 5v6', tv: 'k:M2 2h6M5 2v11M8 8l2 5 4-10', yv: 'r:M2 2l3 5 3-5M8 2h5v4|k:M5 7v6M8 9l2 5 4-8', sn1: 'r:M2 4h5M4 2v5|k:M5 13L10 5M11 3h3v4h-3z', sn2: 'r:M2 4h5M4 2v5|k:M4 13L10 5h3M8 13h2M12 13h2', tag1: 'r:M1 4l3 3 5-6|k:M10 3h4v10l-4 2-4-4', tag2: 'r:M2 4h5M4 2v5|k:M9 3h5v10l-4 2-4-5', gearr: 'r:M1 3h5M3 1v5|k:' + circle(10, 10, 3) + 'M4 6l11 8M15 6L5 14', bars: 'r:M1 3h5M3 1v5|D:M3 7h3v7H3zM7 6h3v8H7zM11 5h3v9h-3z', brack: 'r:M1 3h5M3 1v5|k:M7 4h6v9H7zM5 9h10', lev: 'r:M2 5l3 2 3-5M9 5l2 2 3-5|K:M2 10h12v4H2z', tri3: 'r:M2 13L8 4v9M8 13h3l3-7|D:M11 12h4v3h-4z', rhat: 'r:M1 13l8-11 4 3-7 9M3 12l9-5M4 8l6 5M8 4l5 5', comb: 'r:M1 3h5M3 1v5|k:M4 13V6h10v8M7 14V9M11 14V9', dimr: 'k:M2 2h12M5 4h7|r:M3 7v7M12 7v7M3 11h10', note: 'k:M3 2h2M9 5h3|K:M2 9h3v5H2zM6 9h3v5H6zM10 9h4v5h-4z',
  first: 'k:M3 3v10|K:M12 3v10L5 8z', prev: 'K:M11 3v10L4 8z', next: 'K:M5 3v10l7-5z', last: 'k:M13 3v10|K:M4 3v10l7-5z',
  dlin: dim, dalign: 'k:M2 3l3 4M2 8l10 5M10 7l4 5', darc0: 'k:M2 13L8 5|k:' + circle(11, 4, 2), darc: 'k:M2 13Q3 3 13 2M6 14q0-6 8-8M2 13h4', dord: 'k:M3 3v11h11M7 5v9M11 3v11M3 9h11', drad: 'k:' + circle(8, 8, 6) + 'M8 8L3 4', djog: 'k:M3 4q6-4 10 3M5 8l5-3-2 9', ddia: 'k:' + circle(8, 8, 6) + 'M3 3l10 10', dang: 'k:M2 13h12M2 13L9 3M9 3q4 4 3 10', dq: dim + '|Y:M6 8h5l-3 6z', dbase: 'k:M2 3v11M2 6h7M9 3v3M2 11h12M14 8v4', dcont: 'k:M2 3v11M7 3v11M14 3v11M2 7h12', dspace: 'Y:M4 4h8v8H4z|k:M2 3h12M2 8h12M2 13h12', dbreak: 'k:M2 5h5M10 5h5M11 2v12', dtol: 'k:M2 4h12v9H2zM6 4v9M10 4v9M3 8h2', dcen: 'k:' + circle(8, 8, 6) + 'M8 6v4M6 8h4', dinsp: dim + '|y:M5 10l3 4 5-7', djl: 'k:M1 8h4l3-5 2 9 2-4h3', ded: 'k:M2 4v10l9-2|y:M5 11l8-8', dted: 'k:M4 12l4-9 3 9M5 9h5M1 14h14', dupd: dim + '|k:M9 9h4v4', dsty: dim + '|K:M6 10l7-7 2 2-7 6z',
  refed: 'k:M2 4h12v10H2zM4 1v5M7 9l2 3 4-6', refa: 'k:M2 4h4M3 7h11v6H3zM6 8v4M10 8v4', refr: 'k:M2 3h4M3 7h11v6H3zM6 8v4M10 8v4', refx: 'k:M3 7h11v6H3zM6 8v4M10 8v4|r:M3 1l6 5M9 1L3 6', refs: 'k:M2 3h5v9H2zM9 5h5v9H5v-2M4 1v4',
  s1: 'd:M3 2v9M1 5h6|k:M9 7h3v5', s2: 'k:M3 3v10M6 3v10M10 3v10M13 3v10H3', s3: 'W:M1 1h14v14H1z|k:M1 4h14M1 8h14M1 12h14M4 1v14M8 1v14M12 1v14', s4: 'k:M3 2v10h10', s5: 'b:' + circle(8, 8, 5) + 'M8 8h6M8 8l4-5', s6: 'W:M2 2h12v12H2z|k:M2 2h12v12H2z', s7: 'W:M2 5h9v9H2z|k:M2 5h9v9H2zM2 5l3-3h9v9', s8: 'b:M13 3L2 12h12', s9: 'b:M2 14V4M2 14h12M3 12l6-6|G:M9 2h4v4H9z', s10: 'd:M2 4h4v4M7 6l3 6 4-3', s11: 'D:M7 3h2v10H7zM3 7h10v2H3z', s12: 'L:M1 2h14v12H1z|b:M1 2h14v12H1zM1 6h14M1 10h14', s13: 'W:M4 2h8v12H4z|d:M4 2h8v12H4zM7 5h2', s14: 'd:M2 3h5M4 1v5|G:M7 7h7v7H7z',
  m1: 'W:M2 2h12v12H2z|k:M2 2h12v12H2zM6 5l5 6', m2: 'W:M2 4h5v6H2zM9 4h5v6H9z|k:M1 13h14', m3: 'w:M7 1v7L2 14M7 8l5 6M4 6h6|Y:M10 7h4v6h-4z', m4: 'k:M7 1v7L2 14M7 8l5 6', m5: 'W:' + circle(8, 8, 6) + '|d:' + circle(8, 8, 6) + circle(8, 8, 2) + 'M8 0v3M8 13v3M0 8h3M13 8h3', m6: 'W:M2 7h8v6H2z|d:M2 7h8v6H2zM9 7V3h5v3', m7: 'W:M2 3h11v7H2z|d:M2 3h11v7H2zM8 10l5 4v-6', m8: 'Y:M2 3h11v9H2z|G:M7 7h8v6H7z|W:M3 4h5v3H3z', m9: 'Y:' + circle(8, 6, 4) + '|w:M6 11h4M6 13h4', m10: 'W:M1 3h14v11H1z|k:M1 3h14v11H1z', m11: 'W:M12 3h2v2h-2zM8 7h2v2H8zM12 7h2v2h-2zM4 11h2v2H4zM8 11h2v2H8zM12 11h2v2h-2z',
  binoc: 'W:M2 6l2-4h3v11H1zM9 2h3l3 11H9zM6 5h4v3H6z|k:M3 9h3M10 9h3', key: 'W:' + circle(4, 4, 3) + 'M6 8l2-2 7 7-2 2z', dish: 'W:M2 2q0 8 9 8zM3 12h9v2H3zM8 5l4-4 1 2-4 4z', star: 'W:M8 1l2 5h5l-4 4 2 5-5-3-5 3 2-5-4-4h5z', help: 'W:' + circle(8, 8, 7) + '|b:M5 6q3-5 6-1 0 3-3 3v2M8 11v2', wmin: 'D:M2 9h11v2H2z', wmax: 'd:M3 3h9v9H3zM3 4h9', wclose: 'D:M2 3h3l3 3 3-3h3L10 8l4 5h-3L8 10l-3 3H2l4-5z', wrest: 'd:M5 3h8v7M2 6h8v7H2z',
  trup: 'W:M5 9l3-3 3 3z', tcam: 'D:M1 4q6-3 12 0l1 4H7v4H4z|L:M7 8h8v6H7z', tflag: 'W:M2 2h2v12H2zM5 3h7v6H5z|R:' + circle(11, 11, 4) + '|w:M9 9l4 4M13 9l-4 4', tav: 'Y:' + circle(8, 8, 7) + '|w:' + circle(8, 8, 3), tnet: 'D:M1 3h5v9H1z|W:M6 3h8v8H6zM7 12h6v2H7z|K:M7 4h6v5H7z', tvol: 'W:M1 6h3l4-4v12l-4-4H1z|w:M10 5q2 3 0 6M12 3q4 5 0 10'
};
// The ten layer-utility buttons share one stack glyph with a different badge.
['Y:M9 9l5 1-3 5z', 'g:M8 11l3 3 4-5', 'b:M4 7h6M12 12v3', 'G:M11 10h3v3h-3z', 'y:M3 2l11 11', 'k:M11 8v6M14 8v6', 'b:M6 9h7v5H6z', 's:M9 9h5l-3 5z', 'Y:M9 9h5v5H9z', 'S:M9 9h5v5H9z'].forEach((badge, i) => {
  ICONS['lay' + (i + 1)] = (i > 5 ? 'k:M3 4h9l-3 5M3 4l-2 5' : stack) + '|' + badge;
});

function drawIcon(name) {
  const paths = ICONS[name].split('|').map(layer => {
    const key = layer[0], color = COLORS[key.toLowerCase()], d = layer.slice(2);
    return key === key.toUpperCase() ? `<path fill="${color}" fill-rule="evenodd" d="${d}"/>` : `<path stroke="${color}" d="${d}"/>`;
  });
  return `<svg class="ic" viewBox="0 0 16 16">${paths.join('')}</svg>`;
}

document.querySelectorAll('[data-icons]').forEach(bar => {
  bar.innerHTML = bar.dataset.icons.split(' ').map(item => {
    if (item === '|') return '<hr>';
    const name = item.replace('+', '');
    const cls = (name === 'tiny' ? 'tiny' : '') + (item.endsWith('+') ? 'on' : '');
    return `<button class="${cls}" aria-label="${name}">${drawIcon(name)}</button>`;
  }).join('');
});
```
